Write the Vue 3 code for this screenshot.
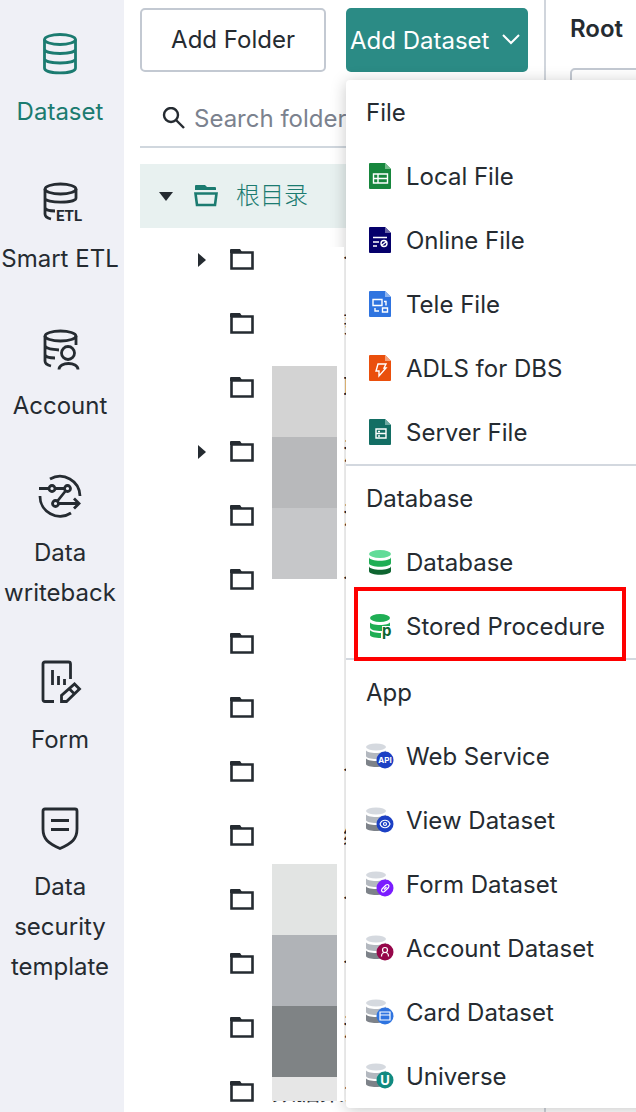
<script setup>
import { ref } from 'vue'

const keyword = ref('')
const menuOpen = ref(true)
const active = ref('dataset')

const nav = [
  { id: 'dataset', label: 'Dataset' },
  { id: 'etl', label: 'Smart ETL' },
  { id: 'account', label: 'Account' },
  { id: 'writeback', label: 'Data writeback' },
  { id: 'form', label: 'Form' },
  { id: 'security', label: 'Data security template' }
]

const folders = [
  { name: '个', children: true },
  { name: '努' },
  { name: '取' },
  { name: '注', children: true },
  { name: '注' },
  { name: '个' },
  { name: '' },
  { name: '' },
  { name: '个' },
  { name: '编' },
  { name: '个' },
  { name: '个' },
  { name: '注' },
  { name: '数据集注', full: true }
]

const groups = [
  {
    title: 'File',
    items: [
      { label: 'Local File', kind: 'file', color: '#17863d', fold: '#74bd8b', glyph: 'M4.5 11h14v9h-14zM4.5 15.5h14M9 11v9' },
      { label: 'Online File', kind: 'file', color: '#05006b', fold: '#6966a6', glyph: 'M4 10.500h14M4 15h6M4 19h4M18 16.500a3 3 0 1 1-6 0a3 3 0 1 1 6 0M13 18l4-3' },
      { label: 'Tele File', kind: 'file', color: '#2f74e0', fold: '#8db4f0', glyph: 'M4 8.500h9v6h-9zM13.500 17h5v4h-5zM15 10.500h2v4M6 17v3h4' },
      { label: 'ADLS for DBS', kind: 'file', color: '#ea4f0c', fold: '#f4a17c', glyph: 'M9 9h8l-2 4h2l-7 8v-5H7z' },
      { label: 'Server File', kind: 'file', color: '#136e64', fold: '#6ea9a2', glyph: 'M7 10h10v9H7zM7 14.500h10M9 12.500h2M9 17h2' }
    ]
  },
  {
    title: 'Database',
    items: [
      { label: 'Database', kind: 'db' },
      { label: 'Stored Procedure', kind: 'proc', marked: true }
    ]
  },
  {
    title: 'App',
    items: [
      { label: 'Web Service', kind: 'app', color: '#1c40c4', text: 'API' },
      { label: 'View Dataset', kind: 'app', color: '#1c40c4', glyph: 'M14 17c2-5 8-5 10 0c-2 5-8 5-10 0M20.500 17a1.500 1.500 0 1 1-3 0a1.500 1.500 0 1 1 3 0' },
      { label: 'Form Dataset', kind: 'app', color: '#7a1cff', glyph: 'M16 18l4-4q1.500-1 2.500 0t0 2.500l-4 4q-1.500 1-2.500 0t0-2.500zM18 18.500l2.500-2.500' },
      { label: 'Account Dataset', kind: 'app', color: '#96064a', glyph: 'M21.500 15a2.500 2.500 0 1 1-5 0a2.500 2.500 0 1 1 5 0M15.500 21.500c0-2 1-4 3.500-4s3.500 2 3.500 4' },
      { label: 'Card Dataset', kind: 'app', color: '#2f74e0', glyph: 'M14 13h10v8H14zM14 16h10' },
      { label: 'Universe', kind: 'app', color: '#108a80', text: 'U' }
    ]
  }
]
</script>

<template>
  <div class="page">
    <nav class="sidebar">
      <a
        v-for="item in nav"
        :key="item.id"
        href="#"
        class="nav-item"
        :class="{ active: active === item.id }"
        @click.prevent="active = item.id"
      >
        <svg class="nav-icon" viewBox="0 0 48 48">
          <g v-if="item.id === 'dataset'">
            <ellipse cx="24" cy="9.500" rx="15.500" ry="5" />
            <path d="M8.500 9.500v28.500c0 6.500 31 6.500 31 0v-28.500M8.500 19c0 6 31 6 31 0M8.500 28.500c0 6 31 6 31 0" />
          </g>
          <g v-else-if="item.id === 'etl'">
            <ellipse cx="24.500" cy="12" rx="15.500" ry="5" />
            <path d="M40 12v9c0 5.500-31 5.500-31 0M9 12v25c0 3 2 4 6 5M9 31c1 2 5 3 10 3" />
            <text x="20" y="44" class="etl">ETL</text>
          </g>
          <g v-else-if="item.id === 'account'">
            <ellipse cx="24.500" cy="12" rx="15.500" ry="5" />
            <path d="M40 12v9M9 12v25c0 3 2 4 6 5M9 22c2 3 7 3.500 14 4M9 31c1 2 5 3 10 3" />
            <circle cx="32" cy="29" r="6.500" />
            <path d="M23 45.500c0-8 19-8 19 0" />
          </g>
          <g v-else-if="item.id === 'writeback'">
            <path d="M14 8a20 20 0 0 1 30 17M4 25a20 20 0 0 0 31 17" />
            <path d="M3 17.500h10M19 17.500h9.500M29.500 20l-8 10M23 32.500h20M38 27.500l5 5-5 5" />
            <circle cx="16" cy="17.500" r="3" />
            <circle cx="31.500" cy="17.500" r="3" />
            <circle cx="19.500" cy="32.500" r="3" />
          </g>
          <g v-else-if="item.id === 'form'">
            <path d="M18 43.500H9q-2 0-2-2V6q0-2 2-2h23.500q2 0 2 2v15M16.500 12v15M22.500 18v9M28.500 21v6" />
            <path d="M25.500 43.500v-6L38.500 26l5 5-13 12.500zM33.500 31l5 5" />
          </g>
          <g v-else>
            <path d="M9 4h30q2 0 2 2v18c0 10-5 14-17 19.500C12 38 7 34 7 24V6q0-2 2-2zM15 15.500h18M15 24.500h18" />
          </g>
        </svg>
        <span>{{ item.label }}</span>
      </a>
    </nav>

    <section class="folders">
      <div class="toolbar">
        <button class="btn">Add Folder</button>
        <div class="dropdown">
          <button class="btn primary" @click="menuOpen = !menuOpen">
            Add Dataset
            <svg class="chevron" viewBox="0 0 20 16"><path d="M2 2l8 8 8-8" /></svg>
          </button>
          <div v-if="menuOpen" class="menu">
            <div v-for="group in groups" :key="group.title" class="group">
              <div class="group-title">{{ group.title }}</div>
              <button
                v-for="item in group.items"
                :key="item.label"
                class="option"
                :class="{ marked: item.marked }"
              >
                <svg v-if="item.kind === 'file'" class="option-icon" viewBox="-3 0 28 28">
                  <path :fill="item.color" d="M1 0h15l6 6v19q0 1-1 1H1q-1 0-1-1V1q0-1 1-1z" />
                  <path :fill="item.fold" d="M16 0l6 6h-6z" />
                  <path class="glyph" :d="item.glyph" />
                </svg>
                <svg v-else-if="item.kind === 'db'" class="option-icon" viewBox="0 0 28 28">
                  <path fill="#0e6530" d="M3 17c0 5 22 5 22 0v5c0 5-22 5-22 0z" />
                  <path fill="#1fae54" d="M3 8c0 5 22 5 22 0v6c0 5-22 5-22 0z" />
                  <ellipse fill="#62dc98" cx="14" cy="5" rx="11" ry="4" />
                </svg>
                <svg v-else-if="item.kind === 'proc'" class="option-icon" viewBox="0 0 28 28">
                  <path fill="#1fae54" d="M4 17c1 2 6 3 11 3v5c-6 0-11-1-11-3z" />
                  <path fill="#1fae54" d="M4 9c0 4 20 4 20 0v4h-8v5c-7 0-12-1-12-4z" />
                  <ellipse fill="#1fae54" cx="14" cy="5" rx="10" ry="4" />
                  <text x="16" y="23" class="proc">p</text>
                </svg>
                <svg v-else class="option-icon" viewBox="0 0 28 28">
                  <path fill="#7d8289" d="M0 15c0 4 20 4 20 0v6c0 4-20 4-20 0z" />
                  <path fill="#b3b8bf" d="M0 7c0 4 20 4 20 0v6c0 4-20 4-20 0z" />
                  <ellipse fill="#d5d9df" cx="10" cy="4" rx="10" ry="3.500" />
                  <circle :fill="item.color" cx="19" cy="17" r="8.500" />
                  <text v-if="item.text" x="19" :y="item.text === 'U' ? 22 : 20" :class="item.text === 'U' ? 'letter' : 'api'">{{ item.text }}</text>
                  <path v-else class="glyph thin" :d="item.glyph" />
                </svg>
                {{ item.label }}
              </button>
            </div>
          </div>
        </div>
      </div>

      <label class="search">
        <svg viewBox="0 0 24 24"><circle cx="9" cy="8" r="7" /><path d="M14 13l8 8" /></svg>
        <input v-model="keyword" type="text" placeholder="Search folder" aria-label="Search folder">
      </label>

      <div class="tree">
        <div class="row root">
          <svg class="arrow" viewBox="0 0 14 14"><path d="M0 3h14L7 12z" /></svg>
          <svg class="folder open" viewBox="0 0 24 22">
            <path d="M1 5V1q0-1 1-1h9l2 2h8q1 0 1 1v2z" fill="currentColor" stroke="none" />
            <path d="M1.500 8.500h21l-1.500 11.500H3z" />
          </svg>
          <span>根目录</span>
        </div>
        <div class="children">
          <div v-for="(folder, i) in folders" :key="i" class="row child">
            <svg class="arrow" viewBox="0 0 14 14">
              <path v-if="folder.children" d="M3 0v14l8-7z" />
            </svg>
            <svg class="folder" viewBox="0 0 24 22">
              <path d="M0 4V1q0-1 1-1h9l2 3v1z" fill="currentColor" stroke="none" />
              <path d="M1.500 3.500h21v16h-21z" />
            </svg>
            <span class="name" :class="{ full: folder.full }">{{ folder.name }}</span>
          </div>
          <div class="cover">
            <div class="mosaic first"><i class="m1"></i><i class="m2"></i><i class="m3"></i></div>
            <div class="mosaic second"><i class="m4"></i><i class="m5"></i><i class="m6"></i><i class="m7"></i></div>
          </div>
        </div>
      </div>
    </section>

    <main class="content">
      <h1>Root</h1>
      <input type="text" class="filter" aria-label="Filter">
    </main>
  </div>
</template>

<style>
body {
  margin: 0;
  background: #fff;
}
</style>

<style scoped>
.page {
  display: flex;
  height: 100vh;
  overflow: hidden;
  color: #252b31;
  font-family: Inter, 'Noto Sans CJK SC', sans-serif;
  font-size: 24px;
  line-height: 40px;
}

button,
input {
  box-sizing: border-box;
  color: inherit;
  font: inherit;
}

svg {
  flex: none;
  fill: none;
  stroke: none;
}

.sidebar {
  display: flex;
  flex: none;
  flex-direction: column;
  gap: 45px;
  box-sizing: border-box;
  width: 124px;
  padding: 30px 4px 0 0;
  background: #eff0f6;
}

.nav-item {
  display: flex;
  flex-direction: column;
  align-items: center;
  gap: 14px;
  color: inherit;
  text-align: center;
  text-decoration: none;
}

.nav-item.active {
  color: #1b7b70;
}

.nav-icon {
  width: 48px;
  height: 48px;
  stroke: currentColor;
  stroke-width: 2.8;
}

.etl {
  fill: currentColor;
  stroke: none;
  font: bold 15px Roboto, sans-serif;
}

.folders {
  flex: none;
  box-sizing: border-box;
  width: 422px;
  padding: 8px 16px 0;
  border-right: 2px solid #d0d5dc;
}

.toolbar {
  display: flex;
  gap: 20px;
}

.btn {
  width: 186px;
  height: 64px;
  padding: 0;
  border: 2px solid #c3c9d2;
  border-radius: 5px;
  background: #fff;
  cursor: pointer;
}

.btn.primary {
  display: flex;
  align-items: center;
  justify-content: space-between;
  width: 182px;
  padding: 2px 7px 0 4px;
  border: 0;
  background: #2b8b85;
  color: #fff;
}

.chevron {
  width: 20px;
  height: 16px;
  stroke: currentColor;
  stroke-width: 2;
}

.dropdown {
  position: relative;
}

.menu {
  position: absolute;
  z-index: 1;
  top: 72px;
  left: 0;
  width: 320px;
  border-radius: 4px;
  background: #fff;
  box-shadow: 0 2px 16px rgba(0, 0, 0, 0.22);
}

.group + .group {
  border-top: 2px solid #d3d8df;
}

.group-title,
.option {
  display: flex;
  align-items: center;
  box-sizing: border-box;
  height: 64px;
  padding: 2px 20px 0;
}

.option {
  position: relative;
  gap: 12px;
  width: 100%;
  border: 0;
  background: none;
  text-align: left;
  cursor: pointer;
}

.option.marked::after {
  position: absolute;
  z-index: 1;
  top: -7px;
  right: 40px;
  bottom: -3px;
  left: 8px;
  border: 4px solid #fe0000;
  content: '';
}

.option-icon {
  width: 28px;
  height: 28px;
}

.glyph {
  stroke: #fff;
  stroke-width: 1.4;
}

.glyph.thin {
  stroke-width: 1.2;
}

.proc {
  fill: #0e6530;
  font: bold 15px Inter, sans-serif;
}

.api,
.letter {
  fill: #fff;
  font: bold 8px Inter, sans-serif;
  text-anchor: middle;
}

.letter {
  font-size: 13px;
}

.search {
  display: flex;
  align-items: center;
  gap: 8px;
  box-sizing: border-box;
  height: 60px;
  margin-top: 16px;
  padding: 4px 0 0 22px;
  border-bottom: 2px solid #d0d7de;
}

.search svg {
  width: 24px;
  height: 24px;
  stroke: currentColor;
  stroke-width: 2.4;
}

.search input {
  flex: 1;
  min-width: 0;
  padding: 0;
  border: 0;
  outline: 0;
  background: none;
}

.search input::placeholder {
  color: #7b828e;
  opacity: 1;
}

.tree {
  margin-top: 16px;
}

.row {
  display: flex;
  align-items: center;
  height: 64px;
}

.row.root {
  padding-left: 19px;
  background: #e8f1f0;
  color: #1b7b70;
  font-weight: 300;
}

.row.child {
  padding-left: 55px;
}

.arrow {
  width: 14px;
  height: 14px;
  fill: #252b31;
}

.folder {
  width: 24px;
  height: 22px;
  margin: 0 18px 0 21px;
  stroke: currentColor;
  stroke-width: 2.6;
}

.children {
  position: relative;
}

.name {
  padding-left: 71px;
}

.name.full {
  padding-left: 0;
}

.cover {
  position: absolute;
  z-index: 2;
  top: 19px;
  left: 126px;
  display: flex;
  flex-direction: column;
  gap: 285px;
  box-sizing: border-box;
  width: 78px;
  height: 854px;
  padding: 119px 7px 0 6px;
  overflow: hidden;
  background: #fff;
}

.mosaic {
  flex: none;
}

.mosaic i {
  display: block;
  height: 71px;
}

.m1 {
  background: #d3d3d3;
}

.m2 {
  background: #b8b9bb;
}

.m3 {
  background: #c6c7c9;
}

.m4 {
  background: #e2e4e3;
}

.m5 {
  background: #b0b3b7;
}

.m6 {
  background: #7f8385;
}

.m7 {
  background: #e6e6e6;
}

.content {
  flex: 1;
  min-width: 0;
  padding: 9px 0 0 24px;
}

h1 {
  margin: 0 0 19px;
  font-size: 24px;
  font-weight: 600;
}

.filter {
  width: 320px;
  height: 64px;
  border: 2px solid #c3c9d2;
  border-radius: 5px;
}
</style>
